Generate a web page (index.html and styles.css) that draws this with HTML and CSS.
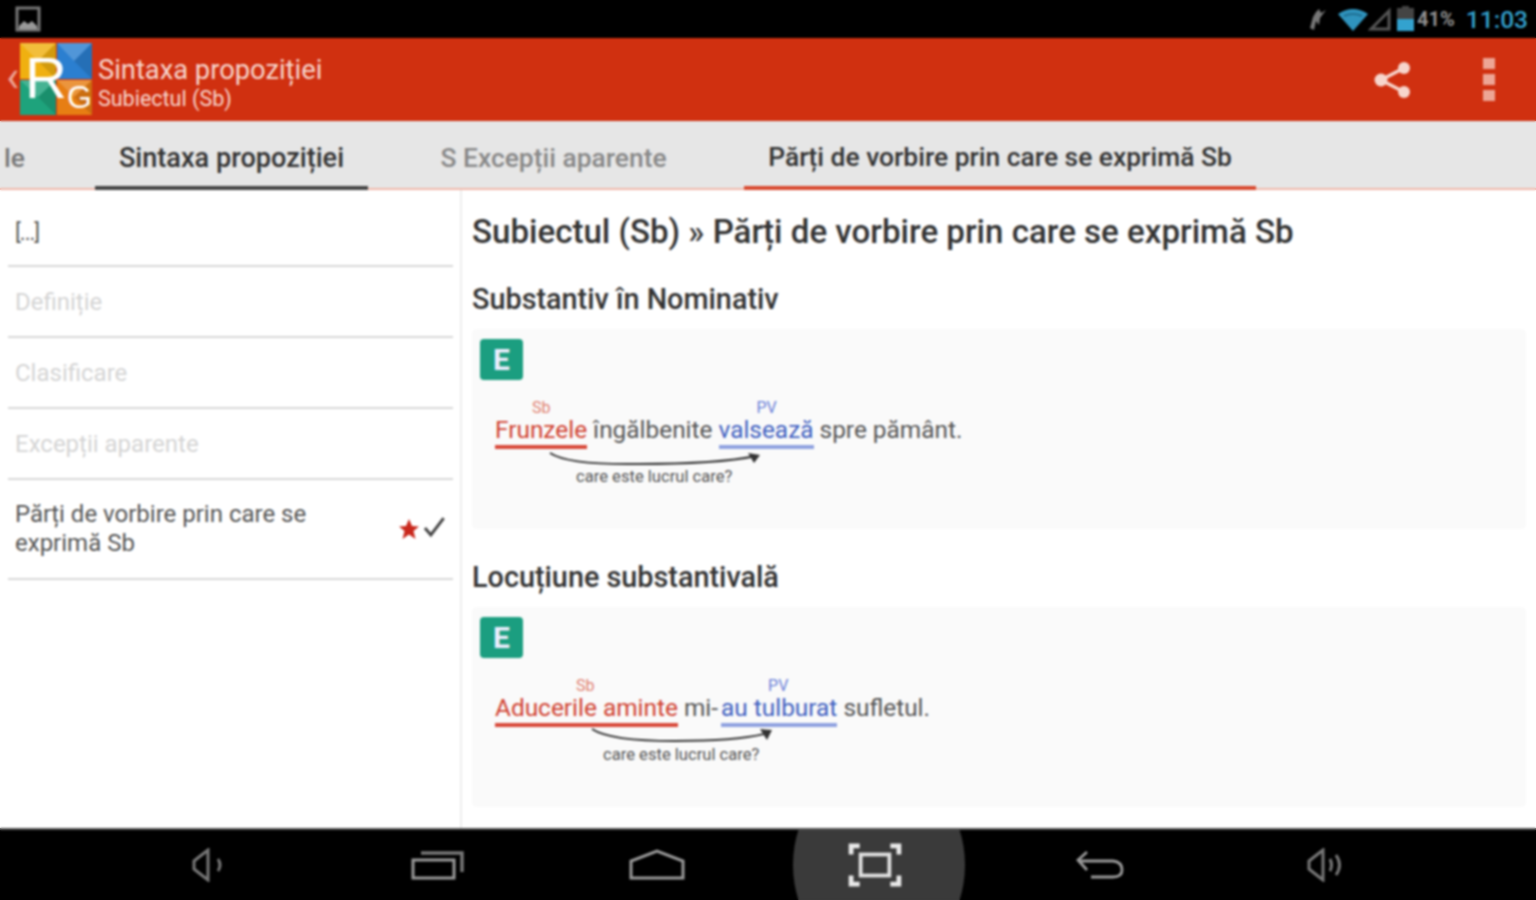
FILE: index.html
```html
<!DOCTYPE html>
<html lang="ro">
<head>
    <meta charset="UTF-8">
    <title>Sintaxa propoziției</title>
    <link rel="stylesheet" href="styles.css">
</head>
<body>
<div class="screen">

    <div class="status-bar">
        <svg class="pic-icon" width="26" height="26" viewBox="0 0 26 26">
            <rect x="2" y="2" width="22" height="22" fill="none" stroke="#777" stroke-width="3"/>
            <path d="M4 23 L4 20 L9 15 L13 18 L17 15 L22 20 L22 23 Z" fill="#999"/>
        </svg>
        <div class="status-right">
            <svg width="22" height="26" viewBox="0 0 22 26">
                <path d="M4 22 L7 11 L10 6 L13 3 L15 7 L20 4 L14 12 L13 19 L10 15 L8 24 Z" fill="#777"/>
            </svg>
            <svg class="wifi" width="32" height="24" viewBox="0 0 32 24">
                <path d="M1 7 Q16 -3 31 7 L16 24 Z" fill="#2f93bd"/>
                <path d="M7 9 Q16 5 25 9" fill="none" stroke="#1f6f92" stroke-width="2"/>
            </svg>
            <svg class="signal" width="24" height="24" viewBox="0 0 24 24">
                <path d="M3 22 L21 4 L21 22 Z" fill="none" stroke="#555" stroke-width="3"/>
            </svg>
            <svg class="battery" width="17" height="26" viewBox="0 0 17 26">
                <rect x="5" y="0" width="7" height="3" fill="#444"/>
                <rect x="0" y="2" width="17" height="11" fill="#444"/>
                <rect x="0" y="13" width="17" height="12" fill="#33a2cf"/>
            </svg>
            <span class="batt-text">41%</span>
            <span class="clock">11:03</span>
        </div>
    </div>

    <div class="action-bar">
        <span class="back-caret">‹</span>
        <svg class="logo" width="74" height="74" viewBox="0 0 74 74">
            <rect x="1" y="1" width="36" height="36" fill="#f0b010"/>
            <rect x="38" y="1" width="35" height="36" fill="#2b7fd0"/>
            <rect x="1" y="38" width="36" height="35" fill="#1ea37c"/>
            <rect x="38" y="38" width="35" height="35" fill="#e77e13"/>
            <path d="M1 1 L19 19 L37 1 Z M38 1 L55 19 L73 1 Z M1 38 L19 55 L37 38 Z M38 38 L55 55 L73 38 Z" fill="#fff" opacity="0.18"/>
            <path d="M37 1 L19 19 L37 37 Z M73 1 L55 19 L73 37 Z M37 38 L19 55 L37 73 Z M73 38 L55 55 L73 73 Z" fill="#000" opacity="0.12"/>
            <text class="logo-mark"><tspan class="logo-r" x="6" y="56">R</tspan><tspan class="logo-g" x="48" y="66">G</tspan></text>
        </svg>
        <div class="titles">
            <div class="title">Sintaxa propoziției</div>
            <div class="subtitle">Subiectul (Sb)</div>
        </div>
        <svg class="share" width="38" height="38" viewBox="0 0 38 38">
            <path d="M30 7 L7 19 L30 31" fill="none" stroke="#f7d5cc" stroke-width="3.5"/>
            <circle cx="30" cy="7" r="6" fill="#f7d5cc"/>
            <circle cx="7" cy="19" r="6.5" fill="#f7d5cc"/>
            <circle cx="30" cy="31" r="6" fill="#f7d5cc"/>
        </svg>
        <div class="overflow">
            <i></i><i></i><i></i>
        </div>
    </div>

    <div class="tabs">
        <div class="tab tab-cut">le</div>
        <div class="tab tab-dark">Sintaxa propoziției</div>
        <div class="tab tab-grey">S Excepții aparente</div>
        <div class="tab tab-red">Părți de vorbire prin care se exprimă Sb</div>
    </div>

    <div class="main">
        <div class="side">
            <div class="row row-first">[...]</div>
            <div class="row row-off">Definiție</div>
            <div class="row row-off">Clasificare</div>
            <div class="row row-off">Excepții aparente</div>
            <div class="row row-current">
                <span class="row-text">Părți de vorbire prin care se exprimă Sb</span>
                <svg class="star" width="20" height="20" viewBox="0 0 20 20">
                    <path d="M10 0 L13 7 L20 7.5 L14.5 12 L16.5 20 L10 15.5 L3.5 20 L5.5 12 L0 7.5 L7 7 Z" fill="#c9281c"/>
                </svg>
                <svg width="24" height="24" viewBox="0 0 24 24">
                    <path d="M3 13 L9 20 L22 3" fill="none" stroke="#444" stroke-width="3"/>
                </svg>
            </div>
        </div>

        <div class="content">
            <h1>Subiectul (Sb) » Părți de vorbire prin care se exprimă Sb</h1>

            <h2>Substantiv în Nominativ</h2>
            <div class="card">
                <div class="badge">E</div>
                <div class="sentence">
                    <span class="word sb">Frunzele<small class="lbl lbl-one">Sb</small></span>
                    îngălbenite
                    <span class="word pv">valsează<small class="lbl lbl-two">PV</small></span>
                    spre pământ.
                    <svg class="arrow arrow-one" width="220" height="24" viewBox="0 0 220 24">
                        <path d="M2 4 Q20 16 90 15 Q170 15 208 7" fill="none" stroke="#333" stroke-width="2"/>
                        <path d="M200 4 L212 6 L206 14 Z" fill="#333"/>
                    </svg>
                    <span class="question q-one">care este lucrul care?</span>
                </div>
            </div>

            <h2>Locuțiune substantivală</h2>
            <div class="card">
                <div class="badge">E</div>
                <div class="sentence">
                    <span class="word sb">Aducerile aminte<small class="lbl lbl-three">Sb</small></span>
                    mi-<span class="word pv pv-joined">au tulburat<small class="lbl lbl-four">PV</small></span>
                    sufletul.
                    <svg class="arrow arrow-two" width="190" height="24" viewBox="0 0 190 24">
                        <path d="M2 3 Q20 15 85 15 Q150 15 178 7" fill="none" stroke="#333" stroke-width="2"/>
                        <path d="M170 3 L182 4 L177 14 Z" fill="#333"/>
                    </svg>
                    <span class="question q-two">care este lucrul care?</span>
                </div>
            </div>
        </div>
    </div>

    <div class="nav-bar">
        <svg class="nav-icon" width="34" height="34" viewBox="0 0 34 34">
            <path d="M3 13 L3 21 L8 25 L17 32 L17 2 L8 9 Z M27 11 Q31 17 27 23" fill="none" stroke="#777" stroke-width="3"/>
        </svg>
        <svg class="nav-icon" width="54" height="30" viewBox="0 0 54 30">
            <rect x="2" y="10" width="41" height="18" fill="none" stroke="#999" stroke-width="3"/>
            <path d="M10 3 L51 3 L51 22" fill="none" stroke="#777" stroke-width="3.5"/>
        </svg>
        <svg class="nav-icon" width="56" height="32" viewBox="0 0 56 32">
            <path d="M2 29 L2 12 L28 2 L54 12 L54 29 Z" fill="none" stroke="#999" stroke-width="3"/>
        </svg>
        <div class="nav-active">
            <svg class="nav-shot" width="54" height="44" viewBox="0 0 56 46">
                <path d="M12 3 L3 3 L3 12 M44 3 L53 3 L53 12 M3 34 L3 43 L12 43 M53 34 L53 43 L44 43" fill="none" stroke="#e8e8e8" stroke-width="5"/>
                <rect x="13" y="12" width="30" height="22" fill="none" stroke="#e0e0e0" stroke-width="4"/>
            </svg>
        </div>
        <svg class="nav-icon" width="50" height="30" viewBox="0 0 50 30">
            <path d="M12 2 L3 10 L12 20 M3 11 L38 11 Q47 12 47 20 Q47 27 38 27 L16 27" fill="none" stroke="#999" stroke-width="2.8"/>
        </svg>
        <svg class="nav-icon" width="38" height="34" viewBox="0 0 38 34">
            <path d="M2 13 L2 21 L7 25 L16 32 L16 2 L7 9 Z M23 11 Q26 17 23 23 M29 7 Q36 17 29 27" fill="none" stroke="#777" stroke-width="3"/>
        </svg>
    </div>

</div>
</body>
</html>
```

FILE: styles.css
```css
* {
    box-sizing: border-box;
}
html, body {
    margin: 0;
    padding: 0;
    overflow: hidden;
}
.screen {
    position: relative;
    width: 1536px;
    height: 900px;
    display: flex;
    flex-direction: column;
    font-family: Roboto, 'Liberation Sans', sans-serif;
    background: #fff;
}
/* the screenshot is soft all over */
.screen::after {
    content: "";
    position: absolute;
    top: 0;
    left: 0;
    right: 0;
    bottom: 0;
    backdrop-filter: blur(0.9px);
}

/* status bar */
.status-bar {
    height: 38px;
    background: #000;
    display: flex;
    align-items: center;
    justify-content: space-between;
    padding: 0 8px 0 15px;
}
.status-right {
    display: flex;
    align-items: center;
    gap: 5px;
}
.wifi {
    margin-left: 4px;
}
.signal {
    margin-left: -6px;
}
.batt-text {
    color: #8f8f8f;
    font-size: 20px;
    font-weight: 700;
    margin-left: -2px;
}
.clock {
    color: #33a2cf;
    font-size: 24.5px;
    font-weight: 500;
    margin-left: 6px;
}

/* action bar */
.action-bar {
    height: 83px;
    background: #d03010;
    display: flex;
    align-items: center;
    padding-left: 6px;
    padding-right: 41px;
    color: #f8d8d0;
}
.back-caret {
    font-size: 44px;
    line-height: 50px;
    width: 13px;
    color: #eda595;
    margin-top: -8px;
}
.logo {
    margin-right: 5px;
    margin-top: -2px;
}
.logo-mark {
    fill: #fff;
    font-family: 'Liberation Sans', sans-serif;
}
.logo-r {
    font-size: 58px;
}
.logo-g {
    font-size: 32px;
}
.titles {
    flex: 1;
    padding-top: 4px;
}
.title {
    font-size: 27.3px;
    line-height: 34px;
}
.subtitle {
    font-size: 21.5px;
    line-height: 24px;
}
.share {
    margin-right: 71px;
}
.overflow {
    display: flex;
    flex-direction: column;
    gap: 5px;
}
.overflow i {
    width: 12px;
    height: 11px;
    background: #eda595;
}

/* tabs */
.tabs {
    height: 69px;
    background: #e6e6e6;
    display: flex;
    border-bottom: 2px solid #f0b8aa;
    font-size: 26.4px;
    font-weight: 500;
}
.tab {
    display: flex;
    align-items: center;
    justify-content: center;
    height: 69px;
    padding-top: 4px;
    white-space: nowrap;
}
.tab-cut {
    width: 95px;
    justify-content: flex-start;
    padding-left: 4px;
    color: #777;
}
.tab-dark {
    width: 273px;
    color: #333;
    font-size: 27.1px;
    padding-top: 8px;
    border-bottom: 4px solid #444;
}
.tab-grey {
    width: 371px;
    color: #888;
}
.tab-red {
    width: 512px;
    margin-left: 5px;
    color: #333;
    padding-top: 6px;
    border-bottom: 4px solid #d8492f;
}

/* left list */
.main {
    flex: 1;
    display: flex;
    min-height: 0;
}
.side {
    width: 462px;
    border-right: 2px solid #eee;
    padding: 0 7px 0 8px;
    font-size: 24px;
    color: #555;
}
.row {
    height: 70px;
    padding: 0 7px;
    display: flex;
    align-items: center;
    border-bottom: 2px solid #d8d8d8;
    margin-top: 1px;
}
.row-first {
    height: 77px;
    margin-top: 0;
    padding-top: 10px;
    font-size: 22px;
    letter-spacing: -1px;
}
.row-off {
    color: #d4d4d4;
}
.row-current {
    height: 99px;
    line-height: 29px;
}
.row-text {
    width: 389px;
    padding-right: 65px;
    margin-top: -2px;
}
.star {
    flex: none;
    margin-right: 3px;
    margin-top: -2px;
}
.row-current svg:last-child {
    margin-top: -5px;
}

/* right content */
.content {
    flex: 1;
    padding: 0 10px;
    min-width: 0;
}
h1 {
    margin: 19px 0 0;
    font-size: 33.1px;
    line-height: 46px;
    font-weight: 500;
    color: #333;
}
h2 {
    margin: 0;
    font-size: 28.8px;
    line-height: 36px;
    font-weight: 500;
    color: #333;
}
.content h1 + h2 {
    margin-top: 26px;
}
.card + h2 {
    margin-top: 30px;
}
.card {
    height: 200px;
    margin-top: 12px;
    background: #fafafa;
    border-radius: 5px;
    padding: 10px 8px;
}
.badge {
    width: 43px;
    height: 41px;
    border-radius: 4px;
    background: #1b9e80;
    color: #eef;
    font-size: 30px;
    font-weight: 700;
    display: flex;
    align-items: center;
    justify-content: center;
}

/* example sentence */
.sentence {
    position: relative;
    margin: 32px 0 0 15px;
    font-size: 24.4px;
    line-height: 36px;
    color: #555;
}
.word {
    position: relative;
    display: inline-block;
    line-height: 30px;
}
.sb {
    color: #d0402f;
    border-bottom: 4px solid #d8493a;
}
.pv {
    color: #4060c0;
    border-bottom: 4px solid #8fa2e0;
}
.pv-joined {
    margin-left: 3px;
}
.lbl {
    position: absolute;
    top: -15px;
    font-size: 16px;
    line-height: 16px;
}
.lbl-one {
    left: 37px;
    color: #e08070;
}
.lbl-two {
    left: 38px;
    color: #6a80d8;
}
.lbl-three {
    left: 81px;
    color: #e08070;
}
.lbl-four {
    left: 47px;
    color: #6a80d8;
}
.arrow {
    position: absolute;
}
.arrow-one {
    left: 53px;
    top: 37px;
}
.arrow-two {
    left: 95px;
    top: 36px;
}
.question {
    position: absolute;
    top: 55px;
    font-size: 16.6px;
    line-height: 20px;
    color: #555;
    white-space: nowrap;
}
.q-one {
    left: 81px;
}
.q-two {
    left: 108px;
}

/* bottom nav */
.nav-bar {
    height: 72px;
    background: #000;
    border-top: 2px solid #555;
    overflow: hidden;
    display: flex;
    align-items: center;
    padding-left: 191px;
}
.nav-icon:nth-child(1) {
    margin-right: 186px;
}
.nav-icon:nth-child(2) {
    margin-right: 164px;
}
.nav-icon:nth-child(3) {
    margin-right: 108px;
}
.nav-active {
    position: relative;
    width: 172px;
    height: 70px;
    margin-right: 110px;
    display: flex;
    align-items: center;
    justify-content: center;
}
/* the round touch highlight, bigger than the bar */
.nav-active::before {
    content: "";
    position: absolute;
    left: 0;
    top: -65px;
    width: 172px;
    height: 200px;
    border-radius: 50%;
    background: #3a3a3a;
}
.nav-shot {
    position: relative;
    margin-right: 8px;
}
.nav-icon:nth-child(5) {
    margin-right: 182px;
}
```
